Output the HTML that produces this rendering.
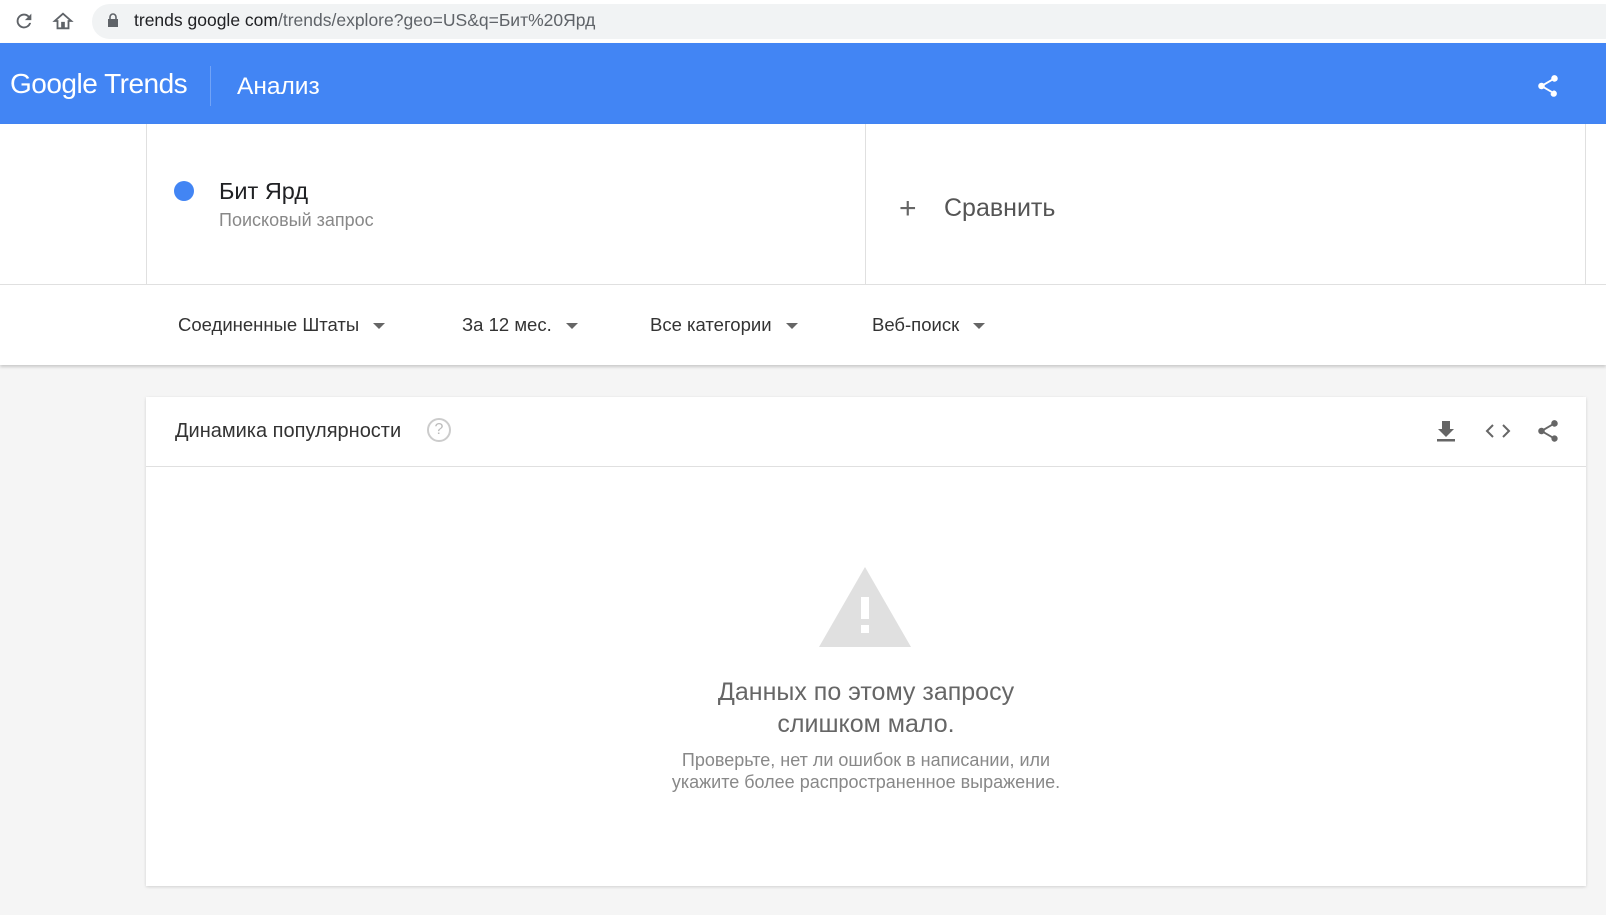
<!DOCTYPE html>
<html><head><meta charset="utf-8"><style>
*{margin:0;padding:0;box-sizing:border-box}
body{width:1606px;height:915px;overflow:hidden;background:#f5f5f5;font-family:"Liberation Sans",sans-serif;position:relative}
.abs{position:absolute}
#url{left:0;top:0;width:1606px;height:43px;background:#fff}
#pill{left:92px;top:4px;width:1530px;height:35px;background:#f1f3f4;border-radius:18px}
#hdr{left:0;top:43px;width:1606px;height:81px;background:#4285f4;box-shadow:0 2px 3px rgba(0,0,0,.2)}
#top{left:0;top:124px;width:1606px;height:241px;background:#fff;box-shadow:0 2px 3px rgba(0,0,0,.18)}
.t{white-space:nowrap}
.caret{display:inline-block;width:0;height:0;border-left:6px solid transparent;border-right:6px solid transparent;border-top:6px solid #666;vertical-align:middle;margin-left:14px}
#card{left:146px;top:397px;width:1440px;height:489px;background:#fff;box-shadow:0 1px 3px rgba(0,0,0,.15)}
</style></head><body>
<div id="url" class="abs"></div>
<div id="pill" class="abs"></div>
<svg class="abs" style="left:13px;top:10px" width="22" height="22" viewBox="0 0 24 24"><path d="M17.65 6.35A7.96 7.96 0 0 0 12 4a8 8 0 1 0 7.73 10h-2.08A6 6 0 1 1 12 6c1.66 0 3.14.69 4.22 1.78L13 11h7V4z" fill="#5f6368"/></svg>
<svg class="abs" style="left:52px;top:10px" width="22" height="22" viewBox="0 0 24 24"><path d="M12 4L3 12h3v8h5v-6h2v6h5v-8h3z" fill="none" stroke="#5f6368" stroke-width="2"/></svg>
<svg class="abs" style="left:107px;top:13px" width="12" height="15" viewBox="0 0 12 15"><rect x="1" y="6" width="10" height="8" fill="#5f6368"/><path d="M3 6V4a3 3 0 0 1 6 0v2" fill="none" stroke="#5f6368" stroke-width="1.6"/></svg>
<div class="abs t" style="left:134px;top:10px;font-size:17.5px;color:#202124">trends google com<span style="color:#5f6368">/trends/explore?geo=US&amp;q=Бит%20Ярд</span></div>
<div id="hdr" class="abs"></div>
<div class="abs t" style="left:10px;top:68px;font-size:28px;color:#fff;letter-spacing:-0.5px">Google Trends</div>
<div class="abs" style="left:210px;top:66px;width:1px;height:40px;background:rgba(255,255,255,.25)"></div>
<div class="abs t" style="left:237px;top:73px;font-size:24.5px;color:#fff">Анализ</div>
<svg class="abs" style="left:1535px;top:73px" width="26" height="26" viewBox="0 0 24 24"><path d="M18 16.08c-.76 0-1.44.3-1.96.77L8.91 12.7c.05-.23.09-.46.09-.7s-.04-.47-.09-.7l7.05-4.11A2.99 2.99 0 0 0 21 5a3 3 0 1 0-5.91.7L8.04 9.81A3 3 0 1 0 6 15c.79 0 1.5-.31 2.04-.81l7.12 4.16c-.05.21-.8.43-.8.65a2.92 2.92 0 1 0 2.92-2.92z" fill="#fff"/></svg>
<div id="top" class="abs"></div>
<div class="abs" style="left:146px;top:124px;width:1px;height:160px;background:#e0e0e0"></div>
<div class="abs" style="left:865px;top:124px;width:1px;height:160px;background:#e0e0e0"></div>
<div class="abs" style="left:1585px;top:124px;width:1px;height:160px;background:#e0e0e0"></div>
<div class="abs" style="left:0;top:284px;width:1606px;height:1px;background:#e0e0e0"></div>
<div class="abs" style="left:174px;top:181px;width:20px;height:20px;border-radius:50%;background:#4285f4"></div>
<div class="abs t" style="left:219px;top:178px;font-size:23.5px;color:#202124">Бит Ярд</div>
<div class="abs t" style="left:219px;top:210px;font-size:18px;color:#888">Поисковый запрос</div>
<div class="abs t" style="left:899px;top:192px;font-size:30px;color:#666;font-weight:300">+</div>
<div class="abs t" style="left:944px;top:194px;font-size:25px;color:#555">Сравнить</div>
<div class="abs t" style="left:178px;top:314px;font-size:18.5px;color:#333">Соединенные Штаты<span class="caret"></span></div>
<div class="abs t" style="left:462px;top:314px;font-size:18.5px;color:#333">За 12 мес.<span class="caret"></span></div>
<div class="abs t" style="left:650px;top:314px;font-size:18.5px;color:#333">Все категории<span class="caret"></span></div>
<div class="abs t" style="left:872px;top:314px;font-size:18.5px;color:#333">Веб-поиск<span class="caret"></span></div>
<div id="card" class="abs"></div>
<div class="abs" style="left:146px;top:466px;width:1440px;height:1px;background:#e0e0e0"></div>
<div class="abs t" style="left:175px;top:420px;font-size:20px;color:#333">Динамика популярности</div>
<div class="abs" style="left:427px;top:418px;width:24px;height:24px;border:2px solid #ccc;border-radius:50%;color:#bbb;font-size:16px;text-align:center;line-height:20px">?</div>
<svg class="abs" style="left:1435px;top:419px" width="22" height="24" viewBox="0 0 22 24"><path d="M7 2h8v8h4l-8 8-8-8h4z" fill="#666"/><rect x="2" y="20" width="18" height="2.5" fill="#666"/></svg>
<svg class="abs" style="left:1485px;top:422px" width="26" height="18" viewBox="0 0 26 18"><path d="M8 3L2 9l6 6M18 3l6 6-6 6" fill="none" stroke="#666" stroke-width="2"/></svg>
<svg class="abs" style="left:1535px;top:418px" width="26" height="26" viewBox="0 0 24 24"><path d="M18 16.08c-.76 0-1.44.3-1.96.77L8.91 12.7c.05-.23.09-.46.09-.7s-.04-.47-.09-.7l7.05-4.11A2.99 2.99 0 0 0 21 5a3 3 0 1 0-5.91.7L8.04 9.81A3 3 0 1 0 6 15c.79 0 1.5-.31 2.04-.81l7.12 4.16a2.92 2.92 0 1 0 2.84-2.27z" fill="#666"/></svg>
<svg class="abs" style="left:819px;top:567px" width="92" height="80" viewBox="0 0 92 80"><path d="M46 0L92 80H0z" fill="#e0e0e0"/><rect x="42" y="30" width="8" height="22" fill="#fff"/><rect x="42" y="58" width="8" height="8" fill="#fff"/></svg>
<div class="abs" style="left:146px;top:676px;width:1440px;text-align:center;font-size:25px;color:#666;line-height:32px">Данных по этому запросу<br>слишком мало.</div>
<div class="abs" style="left:146px;top:749px;width:1440px;text-align:center;font-size:18px;color:#888;line-height:22px">Проверьте, нет ли ошибок в написании, или<br>укажите более распространенное выражение.</div>
</body></html>
